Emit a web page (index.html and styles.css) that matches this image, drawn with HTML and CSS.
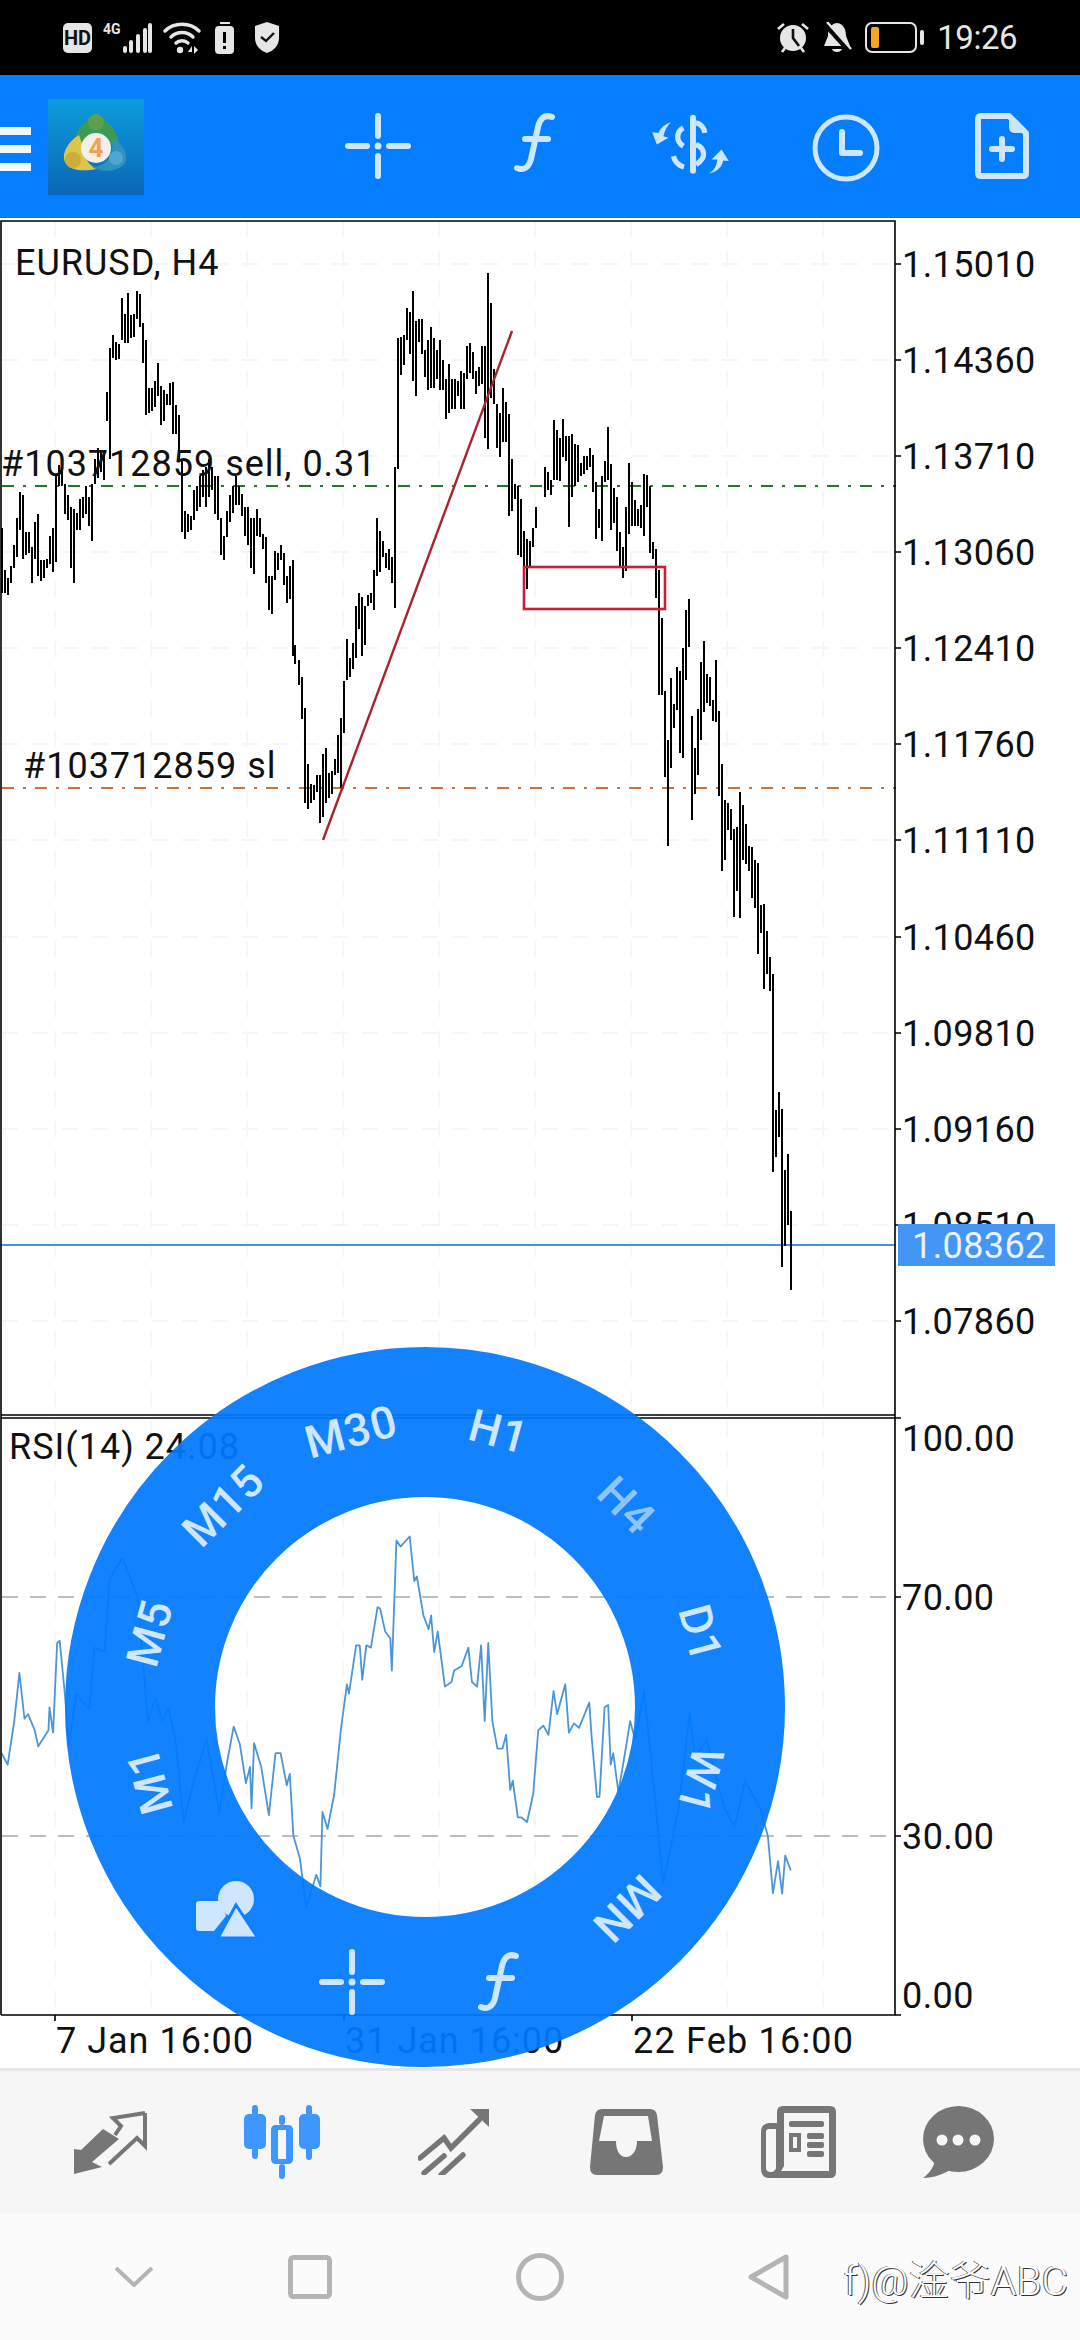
FILE: index.html
```html
<!DOCTYPE html>
<html lang="en">
  <head>
    <meta charset="UTF-8" />
    <meta name="viewport" content="width=device-width, initial-scale=1.0" />
    <title>EURUSD, H4</title>
    <link rel="stylesheet" href="styles.css">
  </head>
  <body>
    <svg class="defs" aria-hidden="true">
      <symbol id="ico-cross" viewBox="0 0 66 66">
        <rect x="0" y="30" width="25" height="6" rx="3" />
        <rect x="41" y="30" width="25" height="6" rx="3" />
        <rect x="30" y="0" width="6" height="26" rx="3" />
        <rect x="30" y="40" width="6" height="26" rx="3" />
        <circle cx="33" cy="33" r="3.5" />
      </symbol>
      <symbol id="ico-f" viewBox="0 0 42 60">
        <path class="ico-line" d="M39 4C31 1 27 6 25 14L18 46C16 54 11 58 4 55" />
        <path class="ico-line" d="M12 26H35" />
      </symbol>
    </svg>

    <div class="status-bar">
      <div class="status-left">
        <svg width="29" height="30" viewBox="0 0 29 30">
          <rect width="29" height="30" rx="5" fill="#e6e6e6" />
          <text x="14.5" y="22" class="hd-text">HD</text>
        </svg>
        <svg width="49" height="34" viewBox="0 0 49 34">
          <text x="0" y="13" class="net-text">4G</text>
          <g fill="#e6e6e6">
            <rect x="20" y="25" width="4" height="7" rx="2" />
            <rect x="26" y="19" width="4" height="13" rx="2" />
            <rect x="33" y="13" width="4" height="19" rx="2" />
            <rect x="40" y="7" width="4" height="25" rx="2" />
            <rect x="45" y="2" width="4" height="30" rx="2" />
          </g>
        </svg>
        <svg width="38" height="32" viewBox="0 0 38 32">
          <g fill="none" stroke="#e6e6e6" stroke-width="3.4" stroke-linecap="round">
            <path d="M2 9C11 0 27 0 36 9" />
            <path d="M8 15C14 9 24 9 30 15" />
            <path d="M13 21C16 18 22 18 25 21" />
          </g>
          <circle cx="17" cy="28" r="3.2" fill="#e6e6e6" />
          <path d="M25 30L29 24V30ZM31 24L35 28L31 32Z" fill="#e6e6e6" />
        </svg>
        <svg width="22" height="34" viewBox="0 0 22 34">
          <rect x="8" y="1" width="10" height="2" fill="#e6e6e6" />
          <rect x="3" y="5" width="19" height="28" rx="4" fill="#e6e6e6" />
          <rect x="11" y="11" width="3" height="11" fill="#000" />
          <rect x="11" y="25" width="3" height="3" fill="#000" />
        </svg>
        <svg class="shield" width="26" height="33" viewBox="0 0 26 33">
          <path d="M13 1L25 5V17C25 25 19 30 13 32C7 30 1 25 1 17V5Z" fill="#e6e6e6" />
          <path d="M7 16L12 20L20 12" fill="none" stroke="#111" stroke-width="2.4" />
        </svg>
      </div>
      <div class="status-right">
        <svg width="32" height="31" viewBox="0 0 32 31">
          <circle cx="16" cy="16" r="13" fill="#e6e6e6" />
          <path d="M16 7V16L22 24" fill="none" stroke="#111" stroke-width="2.6" />
          <path d="M1 7L7 2M31 7L25 2M5 30L8 26M27 30L24 26" stroke="#e6e6e6" stroke-width="2.6" />
        </svg>
        <svg width="30" height="32" viewBox="0 0 30 32">
          <path d="M15 1C22 2 24 8 24 14L28 24H2L6 14C6 8 8 2 15 1Z" fill="#e6e6e6" />
          <path d="M10 27H20C19 31 11 31 10 27Z" fill="#e6e6e6" />
          <path d="M3 2L29 31" stroke="#000" stroke-width="5" />
          <path d="M5 0L29 27" stroke="#e6e6e6" stroke-width="2.4" />
        </svg>
        <div class="battery">
          <div class="battery-body"><span class="battery-level"></span></div>
          <span class="battery-cap"></span>
        </div>
        <span class="clock-text">19:26</span>
      </div>
    </div>

    <div class="toolbar">
      <div class="burger"><span></span><span></span><span></span></div>
      <svg class="app-logo" width="96" height="96" viewBox="0 0 96 96">
        <defs>
          <linearGradient id="logo-bg" x1="0" y1="0" x2="0" y2="1">
            <stop offset="0" stop-color="#0b9ddc" />
            <stop offset="1" stop-color="#0b66b6" />
          </linearGradient>
        </defs>
        <rect width="96" height="96" fill="url(#logo-bg)" />
        <path d="M48 17C60 20 70 32 71 45L60 46C56 38 40 38 34 44L26 42C28 32 36 20 48 17Z" fill="#3c9a58" />
        <path d="M31 36C21 42 13 54 17 63C22 73 37 72 49 70C40 66 36 58 36 50Z" fill="#dcc54c" />
        <path d="M65 39C76 46 81 56 77 64C71 73 54 74 44 68C54 68 62 62 64 52Z" fill="#2f93bf" />
        <circle cx="48" cy="23" r="8" fill="#5ea04e" />
        <circle cx="25" cy="61" r="8" fill="#c9ae3c" />
        <circle cx="68" cy="59" r="7" fill="#4fa6d0" />
        <circle cx="48" cy="49" r="15" fill="#f4f0e8" />
        <text x="48" y="58" class="logo-text">4</text>
      </svg>
      <div class="tool-icons">
        <div class="tool-btn"><svg class="ico-fill" width="66" height="66"><use href="#ico-cross" /></svg></div>
        <div class="tool-btn"><svg class="ico-fill" width="42" height="60"><use href="#ico-f" /></svg></div>
        <div class="tool-btn">
          <svg class="ico-fill" width="80" height="63" viewBox="60 40 240 190">
            <rect x="180" y="45" width="18" height="178" rx="9" />
            <path class="ico-thick" d="M225 100C222 82 210 72 198 70" />
            <path class="ico-thick" d="M160 85C140 95 135 125 160 140" />
            <path class="ico-thick" d="M198 135C225 145 232 175 198 195" />
            <path class="ico-thick" d="M130 170C135 190 150 200 162 203" />
            <path d="M122 68C100 75 88 90 85 100L66 98L80 135L115 115L100 110C103 95 110 80 122 68Z" />
            <path d="M238 222C258 210 262 190 262 180L245 180L275 150L297 185L280 183C278 200 262 218 238 222Z" />
          </svg>
        </div>
        <div class="tool-btn">
          <svg width="70" height="70" viewBox="0 0 70 70">
            <circle class="ico-line ico-thin" cx="35" cy="35" r="31" />
            <path class="ico-line" d="M31 19V40H49" />
          </svg>
        </div>
        <div class="tool-btn">
          <svg width="54" height="66" viewBox="0 0 54 66">
            <path class="ico-line" d="M6 3H34L51 20V60Q51 63 48 63H6Q3 63 3 60V6Q3 3 6 3Z" />
            <path class="ico-fill" d="M34 3L51 20H40Q34 20 34 14Z" />
            <path class="ico-line" d="M27 26V46M17 36H37" />
          </svg>
        </div>
      </div>
    </div>

    <div class="chart-area">
      <svg class="chart" width="1080" height="1850" viewBox="0 218 1080 1850">
        <path class="grid" d="M55 221V2015M151 221V2015M247 221V2015M343 221V2015M439 221V2015M535 221V2015M631 221V2015M727 221V2015M823 221V2015" />
        <path class="grid" d="M2 264H893M2 360H893M2 456H893M2 552H893M2 648H893M2 744H893M2 840H893M2 937H893M2 1033H893M2 1129H893M2 1225H893M2 1321H893" />
        <path class="level" d="M2 1597H894M2 1836H894" />

        <path class="dash-green" d="M2 486H896" />
        <path class="dash-orange" d="M2 788H896" />
        <path class="price-line" d="M0 1245H896" />

        <g transform="translate(0 260) scale(.3444 .3827)">
          <path class="bars" d="M7 700V870M15 810V870M23 830V875M32 800V845M41 745V805M49 675V775M58 605V705M67 615V780M75 710V770M84 710V765M93 750V845M101 685V780M110 665V825M119 785V838M127 785V830M136 780V805M145 720V795M153 700V815M162 560V790M171 535V590M180 550V590M189 585V665M197 615V680M206 645V805M215 650V845M223 660V705M232 625V705M241 618V675M249 590V665M258 620V695M267 585V735M275 520V585M284 490V570M293 500V555M302 500V575M311 345V420M319 230V520M328 195V255M337 215V260M345 220V258M354 100V210M363 140V218M372 85V218M380 145V205M389 140V200M398 82V155M406 90V175M415 165V270M424 210V405M432 335V400M441 335V395M450 315V385M458 270V355M467 330V430M476 340V420M484 350V380M493 322V380M502 320V455M510 380V455M519 405V520M528 520V710M537 655V728M545 665V710M554 670V705M563 600V680M571 590V655M580 565V645M589 550V620M598 540V645M606 520V620M615 540V600M624 565V665M632 565V680M641 675V770M650 720V785M659 655V725M667 615V685M676 590V660M685 565V640M693 590V640M702 612V670M711 645V720M719 645V745M728 675V805M737 675V820M745 650V720M754 675V725M763 715V755M771 725V845M780 825V915M789 825V925M798 760V835M806 765V810M815 745V785M824 765V850M832 825V895M841 800V885M850 785V1035M858 1005V1055M867 1045V1110M876 1090V1200M885 1170V1420M893 1318V1435M902 1368V1420M911 1372V1410M920 1345V1390M929 1345V1470M937 1290V1455M946 1275V1420M955 1340V1405M963 1335V1395M972 1305V1345M981 1240V1340M990 1198V1380M998 1100V1235M1007 990V1098M1015 1040V1090M1024 1000V1070M1033 905V1040M1042 870V965M1050 880V1035M1059 905V1005M1068 875V905M1076 870V895M1085 810V915M1094 675V825M1103 708V815M1112 735V775M1120 765V805M1129 755V810M1138 775V845M1146 540V910M1155 205V545M1164 200V300M1172 195V275M1181 125V210M1190 135V245M1198 80V315M1207 160V355M1216 155V215M1225 155V245M1233 235V305M1242 210V340M1251 175V335M1260 205V335M1269 235V310M1278 210V340M1286 262V340M1295 310V415M1304 272V400M1312 310V390M1321 310V390M1329 315V355M1338 290V390M1347 295V390M1356 225V310M1364 218V295M1373 240V310M1382 290V350M1390 280V330M1399 225V325M1408 225V465M1417 35V495M1425 112V360M1434 285V375M1442 375V490M1451 400V515M1460 335V475M1469 370V475M1477 403V670M1486 520V655M1495 585V625M1504 590V770M1512 625V775M1521 708V800M1530 730V860M1539 735V800M1548 700V750M1556 645V700" />
        </g>
        <g transform="translate(540 260) scale(.3444 .3827)">
          <path class="bars" d="M14 540V620M23 555V600M32 575V613M41 418V575M49 445V575M58 465V578M67 415V515M75 460V525M84 460V697M93 455V618M101 480V590M110 483V580M119 530V565M127 512V560M136 512V550M145 490V540M153 510V605M162 580V728M171 650V700M180 565V733M188 525V580M197 437V575M206 532V705M214 597V688M223 620V760M232 710V800M241 750V832M249 645V812M258 530V715M266 580V695M275 628V695M284 650V695M293 640V700M301 560V722M310 563V645M319 590V765M328 738V780M336 755V882M345 810V1137M354 935V1137M363 1125V1352M371 1255V1532M380 1092V1328M389 1160V1222M398 1063V1175M406 1075V1288M415 1015V1302M424 915V1098M432 887V1012M441 1192V1462M450 1275V1395M459 1172V1347M467 1050V1255M476 995V1180M485 1082V1158M493 1090V1165M502 1150V1205M511 1045V1208M519 1178V1400M528 1318V1568M537 1412V1568M545 1420V1490M554 1435V1515M563 1487V1568M571 1482V1568M580 1390V1568M589 1425V1568M598 1475V1568M606 1532V1568M615 1535V1568" />
        </g>
        <g transform="translate(700 830) scale(.3333)">
          <path class="bars" d="M66 0V122M75 0V82M93 0V28M102 0V260M111 0V182M120 0V265M129 0V77M138 0V103M147 48V122M156 52V203M165 90V233M174 100V371M183 226V310M192 223V476M201 303V433M210 381V482M219 432V1027M228 840V980M237 786V920M246 837V1310M255 1020V1247M264 972V1184M273 1143V1379" />
        </g>

        <path class="red-line" d="M323 840L512 331" />
        <rect class="red-box" x="524" y="567" width="141" height="42" />

        <g transform="translate(0 1340) scale(.5102 .4591)">
          <path class="rsi-line" d="M3 900L15 925L28 830L38 725L48 825L55 815L68 850L75 885L95 850L97 800L104 855L112 660L117 655L127 770L135 880L150 770L175 805L185 670L205 680L215 520L240 475L270 560L280 700L290 830L305 780L318 830L330 800L345 880L360 1050L380 960L405 870L430 1030L445 920L458 842L470 880L482 965L490 930L493 1020L498 878L512 930L527 1035L540 900L550 900L562 970L568 945L575 1080L588 1130L600 1235L620 1165L628 1190L632 1028L642 1065L655 990L668 850L680 750L684 770L698 665L705 665L710 740L718 665L727 670L740 582L745 585L755 635L765 650L768 720L777 437L785 450L803 428L812 525L817 515L830 600L840 630L845 600L851 680L858 635L872 755L885 745L890 720L905 710L918 670L925 745L935 755L943 665L950 830L957 660L965 830L975 890L985 890L992 860L1000 980L1005 960L1015 1040L1022 1040L1033 1050L1045 990L1055 850L1065 840L1075 860L1085 765L1092 815L1108 750L1115 855L1125 835L1135 845L1155 790L1160 870L1170 995L1175 995L1185 800L1192 795L1197 925L1202 900L1212 985L1225 900L1235 830L1245 870L1262 765L1275 900L1300 1185L1330 1020L1352 810L1362 910L1385 870L1405 960L1420 1020L1440 1060L1460 960L1490 1020L1505 1080L1515 1205L1525 1135L1533 1206L1539 1123L1550 1155" />
        </g>

        <path class="frame" d="M1 2015V221H895V2015H1M1 1415H895M1 1418H895" />
        <path class="ticks" d="M895 264H901M895 360H901M895 456H901M895 552H901M895 648H901M895 744H901M895 840H901M895 937H901M895 1033H901M895 1129H901M895 1225H901M895 1321H901M895 1418H901M895 1597H901M895 1836H901M895 2015H901M55 2015V2021M344 2015V2021M632 2015V2021" />

        <text class="chart-text" x="15" y="275">EURUSD, H4</text>
        <text class="chart-text" x="1" y="476">#103712859 sell, 0.31</text>
        <text class="chart-text" x="23" y="778">#103712859 sl</text>
        <text class="chart-text" x="9" y="1459">RSI(14) 24.08</text>

        <text class="axis-text" x="902" y="277">1.15010</text>
        <text class="axis-text" x="902" y="373">1.14360</text>
        <text class="axis-text" x="902" y="469">1.13710</text>
        <text class="axis-text" x="902" y="565">1.13060</text>
        <text class="axis-text" x="902" y="661">1.12410</text>
        <text class="axis-text" x="902" y="757">1.11760</text>
        <text class="axis-text" x="902" y="853">1.11110</text>
        <text class="axis-text" x="902" y="950">1.10460</text>
        <text class="axis-text" x="902" y="1046">1.09810</text>
        <text class="axis-text" x="902" y="1142">1.09160</text>
        <text class="axis-text" x="902" y="1238">1.08510</text>
        <text class="axis-text" x="902" y="1334">1.07860</text>
        <rect class="price-tag" x="898" y="1224" width="157" height="42" />
        <text class="axis-text price-text" x="912" y="1258">1.08362</text>

        <text class="axis-text" x="902" y="1451">100.00</text>
        <text class="axis-text" x="902" y="1610">70.00</text>
        <text class="axis-text" x="902" y="1849">30.00</text>
        <text class="axis-text" x="902" y="2008">0.00</text>

        <text class="chart-text" x="56" y="2053">7 Jan 16:00</text>
        <text class="chart-text" x="345" y="2053">31 Jan 16:00</text>
        <text class="chart-text" x="633" y="2053" textLength="221">22 Feb 16:00</text>
      </svg>

      <div class="tf-ring">
        <span class="tf tf-m1">M1</span>
        <span class="tf tf-m5">M5</span>
        <span class="tf tf-m15">M15</span>
        <span class="tf tf-m30">M30</span>
        <span class="tf tf-h1">H1</span>
        <span class="tf tf-h4">H4</span>
        <span class="tf tf-d1">D1</span>
        <span class="tf tf-w1">W1</span>
        <span class="tf tf-mn">MN</span>
        <svg class="tf tf-f ico-fill" width="42" height="60"><use href="#ico-f" /></svg>
        <svg class="tf tf-cross ico-fill" width="66" height="66"><use href="#ico-cross" /></svg>
        <svg class="tf tf-shapes" width="62" height="58" viewBox="0 0 62 58" fill="#cfe6ff">
          <path d="M3 20H24L30 35L18 50H3Q0 50 0 47V23Q0 20 3 20Z" />
          <circle cx="40" cy="18" r="18" />
          <path d="M40 24L62 57H22Z" stroke="#0f80ff" stroke-width="3" />
        </svg>
      </div>
    </div>

    <div class="tab-bar">
      <div class="tab">
        <svg width="73" height="63" viewBox="0 0 73 63">
          <path class="tab-fill" d="M0 63V38L7 39L29 18L45 28L18 51L28 56Z" />
          <path class="tab-stroke" d="M71 2L39 7L47 15L41 24M71 2V35L63 27L35 53" />
        </svg>
      </div>
      <div class="tab">
        <svg width="76" height="74" viewBox="0 0 76 74">
          <g class="tab-active">
            <rect x="0" y="9" width="22" height="35" rx="5" />
            <rect x="8" y="0" width="6" height="54" rx="3" />
            <path fill-rule="evenodd" d="M32 20H44Q49 20 49 25V54Q49 59 44 59H32Q27 59 27 54V25Q27 20 32 20ZM34 25V54H42V25Z" />
            <rect x="35" y="10" width="6" height="10" rx="3" />
            <rect x="35" y="59" width="6" height="15" rx="3" />
            <rect x="55" y="9" width="21" height="35" rx="5" />
            <rect x="62" y="0" width="6" height="55" rx="3" />
          </g>
        </svg>
      </div>
      <div class="tab">
        <svg width="72" height="66" viewBox="0 0 72 66">
          <path class="tab-stroke tab-bold" d="M2 49L26 29L33 39L61 11" />
          <path class="tab-fill" d="M52 0H71V18Z" />
          <path class="tab-stroke tab-bold" d="M6 64L26 47M23 66L45 46" />
        </svg>
      </div>
      <div class="tab">
        <svg width="73" height="66" viewBox="0 0 73 66">
          <path class="tab-fill" fill-rule="evenodd" d="M12 0H60Q66 0 67 6L73 58Q73 66 66 66H7Q0 66 0 58L5 6Q6 0 12 0ZM14 7L9 32H26C26 42 30 48 36 48C42 48 47 42 47 32H62L58 7Z" />
        </svg>
      </div>
      <div class="tab">
        <svg width="75" height="72" viewBox="0 0 75 72">
          <path class="tab-fill" fill-rule="evenodd" d="M22 0H69Q75 0 75 6V66Q75 72 69 72H8Q0 72 0 62V26Q0 18 8 17H16V6Q16 0 22 0ZM23 7V60L20 65H68V7ZM5 62Q5 66 10 66Q14 66 15 62V23H8Q5 23 5 26Z" />
          <rect class="tab-fill" x="28" y="15" width="35" height="6" rx="2" />
          <path class="tab-fill" fill-rule="evenodd" d="M28 27H40V46H28ZM32 31V42H36V31Z" />
          <rect class="tab-fill" x="46" y="27" width="17" height="6" rx="2" />
          <rect class="tab-fill" x="46" y="36" width="17" height="6" rx="2" />
          <rect class="tab-fill" x="46" y="45" width="17" height="6" rx="2" />
        </svg>
      </div>
      <div class="tab tab-last">
        <svg width="71" height="72" viewBox="0 0 71 72">
          <ellipse class="tab-fill" cx="35.5" cy="33" rx="35.5" ry="33" />
          <path class="tab-fill" d="M12 52C12 60 6 68 0 72C10 72 22 68 30 62Z" />
          <g fill="#f6f6f6">
            <circle cx="19" cy="34" r="5.5" />
            <circle cx="35" cy="34" r="5.5" />
            <circle cx="52" cy="34" r="5.5" />
          </g>
        </svg>
      </div>
    </div>

    <div class="sys-nav">
      <div class="sys-item">
        <svg width="38" height="20" viewBox="0 0 38 20"><path class="sys-line" d="M1 1L19 18L37 1" /></svg>
      </div>
      <div class="sys-item">
        <svg width="44" height="44" viewBox="0 0 44 44"><rect class="sys-line sys-thick" x="2.5" y="2.5" width="39" height="39" rx="3" /></svg>
      </div>
      <div class="sys-item">
        <svg width="48" height="48" viewBox="0 0 48 48"><circle class="sys-line sys-thick" cx="24" cy="24" r="21.5" /></svg>
      </div>
      <div class="sys-item">
        <svg width="42" height="48" viewBox="0 0 42 48"><path class="sys-line sys-thick" d="M38 4V44L3 24Z" /></svg>
      </div>
      <div class="watermark">f)@淦爷ABC</div>
    </div>
  </body>
</html>
```

FILE: styles.css
```css
* {
  box-sizing: border-box;
}

body {
  margin: 0;
  width: 1080px;
  height: 2340px;
  display: flex;
  flex-direction: column;
  overflow: hidden;
  background: white;
  font-family: Roboto, "Noto Sans CJK SC", sans-serif;
}

svg {
  display: block;
}

.defs {
  position: absolute;
  width: 0;
  height: 0;
}

/* status bar */
.status-bar {
  height: 75px;
  background: black;
  display: flex;
  justify-content: space-between;
  align-items: center;
  padding: 0 63px 0 63px;
}

.status-left,
.status-right {
  display: flex;
  align-items: center;
}

.status-left {
  gap: 11px;
}

.status-right {
  gap: 13px;
}

.shield {
  margin-left: 9px;
}

.hd-text {
  font-size: 20px;
  font-weight: 700;
  text-anchor: middle;
  fill: #111;
}

.net-text {
  font-size: 14px;
  font-weight: 700;
  fill: #e6e6e6;
}

.battery {
  display: flex;
  align-items: center;
  gap: 3px;
}

.battery-body {
  width: 52px;
  height: 31px;
  border: 2px solid #e6e6e6;
  border-radius: 7px;
  padding: 3px 4px;
}

.battery-level {
  display: block;
  width: 8px;
  height: 100%;
  border-radius: 2px;
  background: #f5a623;
}

.battery-cap {
  width: 4px;
  height: 15px;
  border-radius: 2px;
  background: #e6e6e6;
}

.clock-text {
  font-size: 33px;
  color: #e6e6e6;
  letter-spacing: -0.5px;
}

/* top toolbar */
.toolbar {
  height: 143px;
  background: #047dff;
  display: flex;
  align-items: center;
}

.burger {
  width: 31px;
  margin-right: 17px;
  margin-top: 4px;
  display: flex;
  flex-direction: column;
  gap: 10px;
}

.burger span {
  height: 8px;
  background: #f2f8ff;
}

.logo-text {
  font-size: 26px;
  font-weight: 700;
  text-anchor: middle;
  fill: #f0a050;
}

.tool-icons {
  display: flex;
  margin-left: auto;
  margin-top: 2px;
}

.tool-btn {
  width: 156px;
  display: flex;
  justify-content: center;
}

.ico-fill {
  fill: #cfe6ff;
}

.ico-line,
.ico-thick {
  fill: none;
  stroke: #cfe6ff;
  stroke-width: 6;
  stroke-linecap: round;
  stroke-linejoin: round;
}

.ico-thin {
  stroke-width: 5;
}

.ico-thick {
  stroke-width: 16;
  stroke-linecap: butt;
}

/* chart */
.chart-area {
  position: relative;
  height: 1850px;
  background: white;
}

.grid {
  fill: none;
  stroke: #f6f6f6;
  stroke-width: 2;
  stroke-dasharray: 16 14;
}

.level {
  fill: none;
  stroke: #bdbdbd;
  stroke-width: 2;
  stroke-dasharray: 16 12;
}

.dash-green,
.dash-orange {
  fill: none;
  stroke-width: 2;
  stroke-dasharray: 12 9 3 9;
}

.dash-green {
  stroke: #1f7a2a;
}

.dash-orange {
  stroke: #c9743c;
}

.price-line {
  fill: none;
  stroke: #4a90e2;
  stroke-width: 2;
}

.bars {
  fill: none;
  stroke: black;
  stroke-width: 2;
  vector-effect: non-scaling-stroke;
  shape-rendering: crispEdges;
}

.red-line {
  fill: none;
  stroke: #a8232e;
  stroke-width: 2.4;
}

.red-box {
  fill: none;
  stroke: #c8202f;
  stroke-width: 2.6;
}

.rsi-line {
  fill: none;
  stroke: #4a96d8;
  stroke-width: 1.8;
  stroke-linejoin: round;
  vector-effect: non-scaling-stroke;
}

.frame,
.ticks {
  fill: none;
  stroke: black;
  stroke-width: 1.6;
}

.chart-text,
.axis-text {
  font-size: 36px;
  fill: #111;
}

.chart-text {
  letter-spacing: 1px;
}

.axis-text {
  letter-spacing: 0.4px;
}

.price-tag {
  fill: #4496f5;
}

.price-text {
  fill: #eaf3ff;
}

/* round timeframe menu */
.tf-ring {
  position: absolute;
  left: 65px;
  top: 1129px;
  width: 720px;
  height: 720px;
  border: 150px solid rgba(0, 120, 255, 0.93);
  border-radius: 50%;
}

.tf {
  position: absolute;
  left: 50%;
  top: 50%;
  font-size: 45px;
  font-weight: 500;
  letter-spacing: 1px;
  color: #cfe6ff;
  white-space: nowrap;
}

.tf-m1 {
  transform: translate(-50%, -50%) rotate(-105deg) translateY(-285px);
}

.tf-m5 {
  transform: translate(-50%, -50%) rotate(-75deg) translateY(-285px);
}

.tf-m15 {
  transform: translate(-50%, -50%) rotate(-45deg) translateY(-285px);
}

.tf-m30 {
  transform: translate(-50%, -50%) rotate(-15deg) translateY(-285px);
}

.tf-h1 {
  transform: translate(-50%, -50%) rotate(15deg) translateY(-285px);
}

.tf-h4 {
  color: #8ec5ff;
  transform: translate(-50%, -50%) rotate(45deg) translateY(-285px);
}

.tf-d1 {
  transform: translate(-50%, -50%) rotate(75deg) translateY(-285px);
}

.tf-w1 {
  transform: translate(-50%, -50%) rotate(105deg) translateY(-285px);
}

.tf-mn {
  transform: translate(-50%, -50%) rotate(135deg) translateY(-285px);
}

.tf-f {
  transform: translate(-50%, -50%) translate(73px, 275px);
}

.tf-cross {
  transform: translate(-50%, -50%) translate(-73px, 275px);
}

.tf-shapes {
  transform: translate(-50%, -50%) translate(-198px, 203px);
}

/* bottom tabs */
.tab-bar {
  height: 145px;
  background: #f6f6f6;
  border-top: 3px solid #e6e6e6;
  padding-left: 24px;
  display: flex;
  align-items: center;
}

.tab {
  width: 172px;
  display: flex;
  justify-content: center;
}

.tab-last {
  width: 148px;
}

.tab-fill {
  fill: #767676;
}

.tab-stroke {
  fill: none;
  stroke: #767676;
  stroke-width: 4;
}

.tab-bold {
  stroke-width: 5.5;
  stroke-linecap: round;
}

.tab-active {
  fill: #3d97ff;
}

/* system nav */
.sys-nav {
  height: 127px;
  background: #fbfbfb;
  display: grid;
  grid-template-columns: 268px 84px 376px 82px 1fr;
  align-items: center;
}

.sys-item {
  display: flex;
  justify-content: center;
}

.sys-line {
  fill: none;
  stroke: #b4b4b4;
  stroke-width: 4;
  stroke-linejoin: round;
}

.sys-thick {
  stroke-width: 5;
}

.watermark {
  padding-left: 34px;
  font-size: 41px;
  font-weight: 300;
  color: white;
  white-space: nowrap;
  text-shadow: 1px 1px 0 #333, -1px 0 0 #555;
}
```
